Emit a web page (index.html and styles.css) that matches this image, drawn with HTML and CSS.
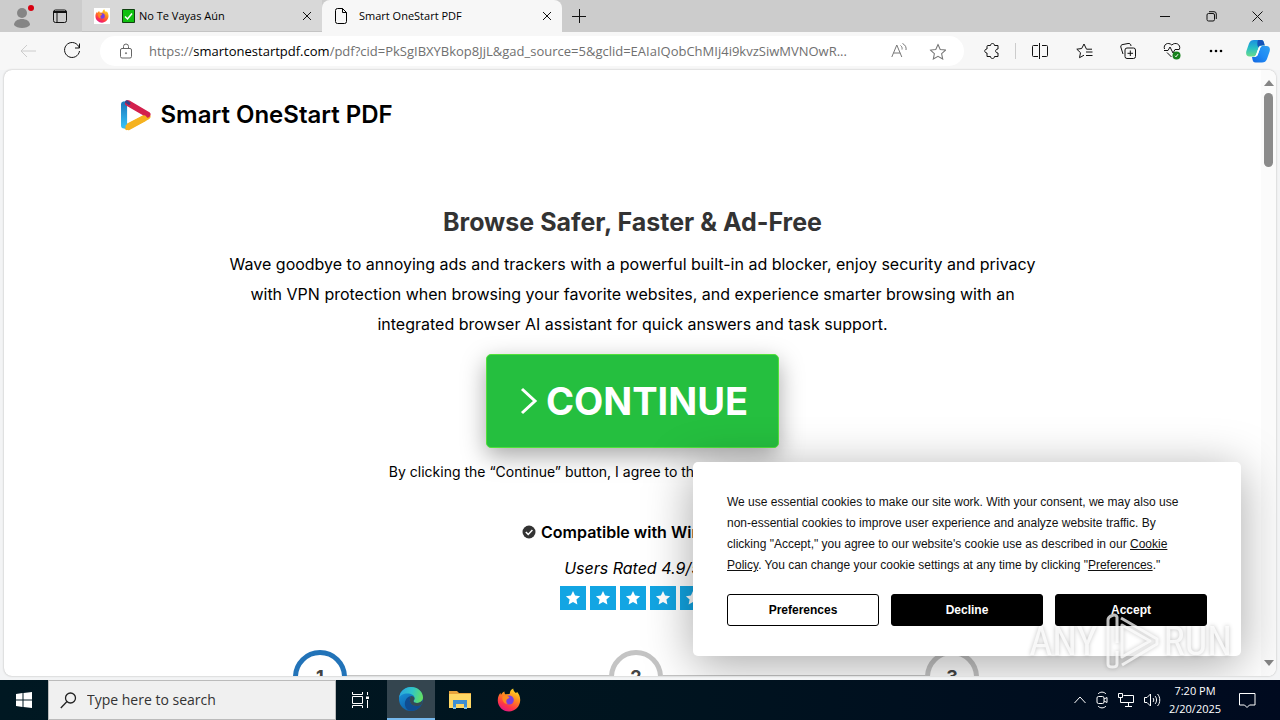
FILE: index.html
```html
<!DOCTYPE html>
<html lang="en">
<head>
<meta charset="utf-8">
<meta name="viewport" content="width=device-width, initial-scale=1">
<title>Smart OneStart PDF</title>
<link rel="stylesheet" href="styles.css">
</head>
<body>
<svg class="defs" width="0" height="0" aria-hidden="true">
  <defs>
    <linearGradient id="fox" x1="0.8" y1="0" x2="0.3" y2="1"><stop offset="0" stop-color="#ffe226"/><stop offset="0.4" stop-color="#ff8a1e"/><stop offset="0.75" stop-color="#ff3647"/><stop offset="1" stop-color="#e31587"/></linearGradient>
    <linearGradient id="edgeTop" x1="0" y1="0.4" x2="1" y2="0.6"><stop offset="0" stop-color="#2aa5e0"/><stop offset="0.5" stop-color="#30c5c8"/><stop offset="1" stop-color="#66e05c"/></linearGradient>
    <linearGradient id="edgeLow" x1="0" y1="0" x2="0.6" y2="1"><stop offset="0" stop-color="#1b9de2"/><stop offset="1" stop-color="#0c59a4"/></linearGradient>
    <linearGradient id="copA" x1="0" y1="0" x2="0" y2="1"><stop offset="0" stop-color="#1a8fe0"/><stop offset="0.5" stop-color="#28bfc4"/><stop offset="1" stop-color="#6bdc8a"/></linearGradient>
    <linearGradient id="copB" x1="1" y1="0" x2="0" y2="1"><stop offset="0" stop-color="#2fa0f0"/><stop offset="0.5" stop-color="#1f8bf5"/><stop offset="1" stop-color="#1266e0"/></linearGradient>
    <linearGradient id="logoBlue" x1="0" y1="0" x2="0" y2="1"><stop offset="0" stop-color="#1d7cc0"/><stop offset="1" stop-color="#35bdf2"/></linearGradient>
    <symbol id="firefox" viewBox="0 0 24 24">
      <path fill="url(#fox)" d="M12.6 6 13.2 3.4C14 2 15.2 1 16.2.6c0 2 1.200 3 2.600 4.400C19.500 5 20 4.500 20 3.800c2 2.200 3.400 5.200 3.200 8.800C22.900 18.800 18 23.500 12 23.500S1 18.800.8 13C.6 9.500 1.800 6.600 3.500 4.800c0 1 .2 1.600.5 2 .9-1.600 2-2.600 3.400-3.300 0 1.300.3 2 .9 2.700z"/>
      <circle cx="12.200" cy="12" r="4.600" fill="#7a3ee0"/>
      <path fill="#ff8a1f" d="M5.500 8.500C7 7 9.500 7 11.500 8.500l1 1.300c-1 1-2.500 1-3 2.200-.5 1.700 0 3 1.200 4-3 .3-6.200-3-5.200-7.500z"/>
    </symbol>
    <symbol id="star" viewBox="0 0 16 16"><path d="m8 1 2.100 4.600 5 .6-3.700 3.400 1 5L8 12.100l-4.400 2.500 1-5L.9 6.200l5-.6z"/></symbol>
  </defs>
</svg>

<header class="tabbar">
  <button class="plain profile" aria-label="Profile"><svg width="28" height="28" viewBox="0 0 28 28"><circle cx="14" cy="11" r="5" fill="#858585"/><path d="M6 23c0-8 16-8 16 0-3 4-13 4-16 0z" fill="#858585"/><circle cx="23" cy="6" r="3" fill="#d80010"/></svg></button>
  <button class="plain actions" aria-label="Tab actions"><svg class="line" width="16" height="16" viewBox="0 0 16 16"><rect x="1.500" y="2" width="13" height="12.500" rx="2"/><path d="M1.500 3.500h13M1.500 4.500h13M5 4v10"/></svg></button>
  <div class="tab">
    <svg class="favicon" width="16" height="16"><rect width="16" height="16" fill="#fff"/><use href="#firefox" x="1" y="1" width="14" height="14"/></svg>
    <svg class="check" width="13" height="14" viewBox="0 0 13 14"><path fill="#10c010" stroke="#104010" d="M.5.5h12v13H.5z"/><path d="m3 7.500 2.500 2.500L10 4.500" fill="none" stroke="#fff" stroke-width="1.500"/></svg>
    <span class="tab-name">No Te Vayas Aún</span>
    <button class="plain close" aria-label="Close tab"><svg class="line" width="10" height="10" viewBox="0 0 10 10"><path d="m1 1 8 8M9 1 1 9"/></svg></button>
  </div>
  <div class="tab tab-active">
    <svg class="line favicon" width="16" height="18" viewBox="0 0 16 18"><path d="M4.500 1.500h5l4 4v9a2 2 0 0 1-2 2h-7a2 2 0 0 1-2-2v-11a2 2 0 0 1 2-2zM9.500 1.500v4h4"/></svg>
    <span class="tab-name">Smart OneStart PDF</span>
    <button class="plain close" aria-label="Close tab"><svg class="line" width="10" height="10" viewBox="0 0 10 10"><path d="m1 1 8 8M9 1 1 9"/></svg></button>
  </div>
  <button class="plain newtab" aria-label="New tab"><svg class="line" width="14" height="14" viewBox="0 0 14 14"><path d="M7.500 0v14M0 7.500h14"/></svg></button>
  <div class="window-buttons">
    <button class="plain" aria-label="Minimize"><svg class="line" width="10" height="10" viewBox="0 0 10 10"><path d="M0 5.500h10"/></svg></button>
    <button class="plain" aria-label="Restore"><svg class="line" width="11" height="11" viewBox="0 0 11 11"><rect x="1" y="2.500" width="7.500" height="7.500" rx="1.500"/><path d="M3 .7h5a2.300 2.300 0 0 1 2.300 2.300v5"/></svg></button>
    <button class="plain" aria-label="Close"><svg class="line" width="11" height="11" viewBox="0 0 11 11"><path d="m.5.5 10 10M10.500.5l-10 10"/></svg></button>
  </div>
</header>

<nav class="toolbar">
  <button class="plain back" aria-label="Back" disabled><svg class="line" width="16" height="14" viewBox="0 0 16 14"><path d="M16 7H1M7 1 1 7l6 6"/></svg></button>
  <button class="plain reload" aria-label="Refresh"><svg class="line" width="18" height="18" viewBox="0 0 18 18"><path d="M16.300 6A7.500 7.500 0 1 0 16.500 9M16.500 1.500V6H12"/></svg></button>
  <div class="address">
    <svg class="line lock" width="14" height="16" viewBox="0 0 14 16"><rect x="1.500" y="5.500" width="11" height="9.500" rx="1.500"/><path d="M4.500 5.500V3.500a2.500 2.500 0 0 1 5 0v2"/><circle cx="7" cy="10.200" r=".6"/></svg>
    <div class="url" role="textbox" aria-label="Address" contenteditable="true" spellcheck="false">https://<b>smartonestartpdf.com</b>/pdf?cid=PkSgIBXYBkop8JjL&amp;gad_source=5&amp;gclid=EAIaIQobChMIj4i9kvzSiwMVNOwR...</div>
    <button class="plain" aria-label="Read aloud"><svg class="line" width="16" height="16" viewBox="0 0 16 16"><path d="M.8 14 5.800 2l5 12M2.600 10h6.600M9.500 2.500c1.500 1 1.800 2.500 1.500 4M11.500.5c3 1.500 4 4 3.500 6.500"/></svg></button>
    <button class="plain" aria-label="Add to favorites"><svg class="line" width="17" height="17" viewBox="-.5 -.5 17 17"><use href="#star"/></svg></button>
  </div>
  <button class="plain ext" aria-label="Extensions"><svg class="line" width="16" height="16" viewBox="0 0 16 16"><path d="M4 2.500h2.500c0-2.700 4-2.700 4 0h3.500v3.500c-3.200 0-3.200 4 0 4v3.500h-3.500c0 2.700-4 2.700-4 0H3v-3.500c-3 0-3-4 0-4V3.500a1 1 0 0 1 1-1z"/></svg></button>
  <span class="rule"></span>
  <button class="plain tool" aria-label="Split screen"><svg class="line" width="16" height="16" viewBox="0 0 16 16"><path d="M6 2.500H1.500a1 1 0 0 0-1 1v9a1 1 0 0 0 1 1H6M10 2.500h4.500a1 1 0 0 1 1 1v9a1 1 0 0 1-1 1H10M7.500 0v16"/></svg></button>
  <button class="plain tool" aria-label="Favorites"><svg class="line" width="17" height="16" viewBox="0 0 17 16"><path d="M16 6.200h-5.500L8 1 5.700 5.500.8 6.200l3.700 3.500-1 5L8 12.200M10 9h6.500M10 12.500h6.500"/></svg></button>
  <button class="plain tool" aria-label="Collections"><svg class="line" width="16" height="16" viewBox="0 0 16 16"><rect x="5" y="5" width="10.500" height="10.500" rx="2"/><path d="M10.300 7.500v5.500M7.500 10.300h5.500M3 11 .8 4A2 2 0 0 1 2 1.700l6-1.200c1.500-.3 3 .5 3 2.500"/></svg></button>
  <button class="plain tool" aria-label="Browser essentials"><svg class="line" width="18" height="18" viewBox="0 0 18 18"><path d="M1.500 7C0 2.500 5-.5 8.800 3 12.500-.5 18 2.500 16.500 7M1 8.500h4L7 5l3 6 2-3.500h4.500M4 10.500 8.500 15"/><circle cx="13.500" cy="13.500" r="4" fill="#16811b" stroke="none"/><path d="m12 13.800 1 1 2-2.600" stroke="#fff"/></svg></button>
  <button class="plain tool" aria-label="Settings and more"><svg width="14" height="4" viewBox="0 0 14 4"><circle cx="2" cy="2" r="1.300"/><circle cx="7" cy="2" r="1.300"/><circle cx="12" cy="2" r="1.300"/></svg></button>
  <button class="plain copilot" aria-label="Copilot"><svg width="24" height="23" viewBox="0 0 24 23"><path fill="url(#copA)" d="M8 0h7c2 0 2.500 1 3 3l.7 2.500C14 5 13 6 12.300 8.500l-2 5.500C9.700 16 9 16.500 7 16.500H3.500C.5 16.500-.4 14 .4 11L3 3.500C4 1 5.500 0 8 0z"/><path fill="#1553b8" d="M12 0h3c2 0 2.500 1 3 3l.7 2.500c-4-.5-6 .5-6.200 2C11 6 11 2 12 0z"/><path fill="url(#copB)" d="M16 22.500H9.500c-2 0-2.500-1-3-3L6 17c4 .3 5.300-.5 6-3l2-5.500C14.700 6.500 15.300 6 17 6h3.500c3 0 3.900 2.500 3.100 5.500L21 19c-1 2.500-2.500 3.500-5 3.500z"/><path fill="#fff" d="M12.300 8.500C13 6.500 14 6 17 6c-1.700 0-2.300.5-3 2.500L12 14c-.7 2.300-2 3.100-5 2.600 2 0 2.700-.6 3.300-2.600z"/></svg></button>
</nav>

<div class="frame">
  <main class="page">
    <div class="brand">
      <svg width="32" height="32" viewBox="0 0 32 32" fill="none" stroke-width="6" stroke-linecap="round"><path stroke="#f5b21f" d="M27.500 17.500 7 28"/><path stroke="url(#logoBlue)" d="M4 5.500v21M4.100 5.500v21"/><path stroke="#d3204d" d="M8 4.200 27.500 15.500"/><path stroke="#f5b21f" d="m24 19.500-15.500 8.500"/><path stroke="#3a3f87" stroke-width="3" d="M6.500 2.800 9 4.500"/></svg>
      <span class="brand-name">Smart OneStart PDF</span>
    </div>
    <h1 class="headline">Browse Safer, Faster &amp; Ad-Free</h1>
    <p class="lead">Wave goodbye to annoying ads and trackers with a powerful built-in ad blocker, enjoy security and privacy with VPN protection when browsing your favorite websites, and experience smarter browsing with an integrated browser AI assistant for quick answers and task support.</p>
    <button class="cta"><svg width="18" height="28" viewBox="0 0 18 28" fill="none" stroke="#fff" stroke-width="3"><path d="m2 2 13 12L2 26"/></svg>CONTINUE</button>
    <p class="terms">By clicking the “Continue” button, I agree to the Terms and Privacy Policy.</p>
    <p class="compat"><svg width="14" height="14" viewBox="0 0 14 14"><circle cx="7" cy="7" r="6.500" fill="#333"/><path d="m3.800 7 2.400 2.400 4.200-4.500" fill="none" stroke="#fff" stroke-width="1.500"/></svg>Compatible with Windows</p>
    <p class="rated">Users Rated 4.9/5</p>
    <div class="stars">
      <svg class="star"><use href="#star" x="5" y="4" width="16" height="16"/></svg>
      <svg class="star"><use href="#star" x="5" y="4" width="16" height="16"/></svg>
      <svg class="star"><use href="#star" x="5" y="4" width="16" height="16"/></svg>
      <svg class="star"><use href="#star" x="5" y="4" width="16" height="16"/></svg>
      <svg class="star"><use href="#star" x="5" y="4" width="16" height="16"/></svg>
    </div>
    <div class="steps">
      <span class="step step-on">1</span><span class="bar"></span>
      <span class="step">2</span><span class="bar"></span>
      <span class="step">3</span>
    </div>
  </main>
  <div class="scroll"><svg width="10" height="6"><path d="m0 6 5-6 5 6z"/></svg><span class="thumb"></span><svg width="10" height="6"><path d="m0 0 5 6 5-6z"/></svg></div>

  <section class="consent" role="dialog" aria-label="Cookie consent">
    <p class="consent-text">We use essential cookies to make our site work. With your consent, we may also use non-essential cookies to improve user experience and analyze website traffic. By clicking "Accept," you agree to our website's cookie use as described in our <a href="#cookies">Cookie Policy</a>. You can change your cookie settings at any time by clicking "<a href="#preferences">Preferences</a>."</p>
    <div class="consent-actions">
      <button class="choice choice-light">Preferences</button>
      <button class="choice">Decline</button>
      <button class="choice">Accept</button>
    </div>
  </section>
  <div class="watermark"><span>ANY</span><svg width="58" height="62" viewBox="0 0 58 62" fill="none" stroke="#fff" stroke-opacity=".75" stroke-width="3" stroke-linejoin="round"><path d="M19 7 55 28v5L20 54M15 40v13c0 4-9 4-9 0V9c0-4 8-7 9-3v26M20 14l28 16-28 16z"/></svg><span>RUN</span></div>
</div>

<footer class="taskbar">
  <button class="plain start" aria-label="Start"><svg width="16" height="16" viewBox="0 0 16 16" fill="#fff"><path d="m0 2 6.500-1v6.500H0zM7.500.9 16 0v7.500H7.500zM0 8.500h6.500V15L0 14zM7.500 8.500H16V16l-8.500-1z"/></svg></button>
  <label class="search"><svg width="17" height="17" viewBox="0 0 17 17" fill="none" stroke="#222" stroke-width="1.300"><circle cx="10.500" cy="6" r="5"/><path d="M7 9.500.8 16"/></svg><input type="text" placeholder="Type here to search" aria-label="Type here to search"></label>
  <button class="plain app" aria-label="Task view"><svg width="17" height="16" viewBox="0 0 17 16" fill="none" stroke="#fff"><path d="M.5 0v2.500h10V0M.5 4.500h10v7H.5zM.5 16v-2.500h10V16M15.500 0v3M15.500 8v8"/><path d="M14 4.500h3v2.500h-3z" fill="#fff" stroke="none"/></svg></button>
  <button class="plain app app-on" aria-label="Microsoft Edge"><svg width="24" height="24" viewBox="0 0 24 24"><circle cx="12" cy="12" r="12" fill="url(#edgeLow)"/><path fill="url(#edgeTop)" d="M0 11C1 4 6 0 12 0c7 0 12 5 12 10.500 0 3.500-3 5.500-6 5.500-2.500 0-3.500-1-3.500-2 0-.7 1-1 1-3C15.500 8 12 6.500 8.500 6.500 4 6.500 1 8.500 0 11z"/><path fill="#104c91" d="M9 23c-3-2.500-4-6-2.500-9.500C7.500 11 9.500 9.500 12 9c-2 3-1.500 7 1.500 9 3 1.700 6 1.300 9-.5-3 5-8 7.500-13.500 5.500z"/><path fill="#354a55" d="M12 9c2 0 3.500 1 3.500 2.500s-1 1.800-1 2.500c0 1 1 2 3.500 2 2 0 4-1 5.200-2.500.5.5.3 2.500-.7 4-3 1.800-6 2.200-9 .5C10.500 16 10 12 12 9z"/></svg></button>
  <button class="plain app" aria-label="File Explorer"><svg width="22" height="20" viewBox="0 0 22 20"><path fill="#e8a33c" d="M0 1h8l2 2h12v6H0z"/><path fill="#ffd764" d="M0 4h22v14H0z"/><path fill="#3f8fd2" d="M4 10h14v8h-3v-4H7v4H4z"/><path fill="#7ac0ee" d="M4 17h3v2H4zM15 17h3v2h-3z"/></svg></button>
  <button class="plain app" aria-label="Firefox"><svg width="24" height="24"><use href="#firefox" width="24" height="24"/></svg></button>
  <div class="tray">
    <svg width="12" height="8" viewBox="0 0 12 8"><path d="m.5 7 5.500-6 5.500 6"/></svg>
    <svg width="12" height="18" viewBox="0 0 12 18"><rect x="1" y="5.500" width="7" height="7" rx="1.500"/><path d="m8 8 3-1.500v5L8 10M2 3c2-2.500 6-2.500 8 0M2 15c2 2.500 6 2.500 8 0"/></svg>
    <svg width="16" height="14" viewBox="0 0 16 14"><path d="M5.500 2.500h10v7h-10M.5.500h4v4h-4zM2.500 5v4.500h4M10.500 9.500v4M7 13.500h7"/></svg>
    <svg width="17" height="16" viewBox="0 0 17 16"><path d="M.5 5.500H3L6.500 2v12L3 10.500H.5zM9 6c1 1 1 3 0 4M11 4c2 2 2 6 0 8M13.500 2c3 3 3 9 0 12"/></svg>
    <div class="clock"><span>7:20 PM</span><span>2/20/2025</span></div>
    <svg width="17" height="17" viewBox="0 0 17 17"><path d="M.5 1.500h15.500v11.500h-5.500l-2.500 2.500-2.500-2.500h-5z"/></svg>
  </div>
</footer>
</body>
</html>
```
FILE: styles.css
```css
* { box-sizing: border-box; }
body {
  margin: 0;
  height: 100vh;
  display: flex;
  flex-direction: column;
  overflow: hidden;
  background: #f3f4f5;
  color: #000;
  font-family: Inter, "Liberation Sans", sans-serif;
}
p, h1 { margin: 0; }
svg { flex: none; }
.defs { position: absolute; }
.line { fill: none; stroke: currentColor; }
.plain {
  display: flex;
  align-items: center;
  justify-content: center;
  flex: none;
  padding: 0;
  border: 0;
  background: none;
  color: #111;
}

/* Tab strip */
.tabbar {
  display: flex;
  flex: none;
  height: 32px;
  background: #ccc;
  font: 11px/16px "Open Sans", "Noto Sans", sans-serif;
}
.profile { width: 44px; }
.actions { width: 32px; margin-right: 6px; }
.tab {
  display: flex;
  align-items: center;
  width: 240px;
  padding: 0 8px 0 12px;
  background: #d8d8d8;
  border-bottom: 1px solid #c4c4c4;
}
.tab-active {
  padding-left: 11px;
  background: #f7f7f7;
  border: 0;
  border-radius: 8px 8px 0 0;
}
.favicon { margin-right: 10px; }
.check { margin: 0 4px 0 2px; }
.tab-name { flex: 1; white-space: nowrap; }
.close { width: 14px; }
.newtab { width: 34px; }
.window-buttons { display: flex; margin-left: auto; }
.window-buttons .plain { width: 46px; }

/* Toolbar */
.toolbar {
  display: flex;
  flex: none;
  align-items: center;
  height: 38px;
  padding: 0 10px 0 12px;
  background: #f7f7f7;
}
.back { width: 32px; color: #ccc; }
.reload { width: 32px; margin: 0 12px; }
.address {
  display: flex;
  flex: 1;
  align-items: center;
  min-width: 0;
  height: 30px;
  padding: 0 18px 0 19px;
  border-radius: 16px;
  background: #fff;
}
.address .plain { color: #777; margin-left: 22px; }
.address .plain:first-of-type { margin-left: 12px; }
.lock { color: #666; margin-right: 16px; }
.url {
  flex: 1;
  min-width: 0;
  overflow: hidden;
  white-space: nowrap;
  text-overflow: ellipsis;
  color: #707070;
  font: 13px/20px "Open Sans", "Noto Sans", sans-serif;
}
.url b { color: #000; font-weight: 400; }
.ext { width: 32px; margin-left: 12px; }
.rule { width: 1px; height: 16px; margin: 0 2px 0 7px; background: #ccc; }
.tool { width: 44px; }
.copilot { margin-left: 8px; }

/* Web page */
.frame {
  position: relative;
  display: flex;
  flex: 1;
  min-height: 0;
  margin: 0 4px 4px;
  overflow: hidden;
  border-radius: 8px;
  background: #fff;
  box-shadow: 0 0 2px #aaa;
}
.page {
  display: flex;
  flex: 1;
  flex-direction: column;
  align-items: center;
  min-width: 0;
}
.brand {
  display: flex;
  align-items: center;
  gap: 9px;
  width: 100%;
  max-width: 1026px;
  padding: 29px 0 0;
}
.brand-name { font-size: 24px; line-height: 32px; font-weight: 600; }
.headline {
  margin-top: 76px;
  color: #333;
  font-size: 25px;
  line-height: 30px;
  font-weight: 700;
}
.lead {
  max-width: 830px;
  margin-top: 12px;
  font-size: 16px;
  line-height: 30px;
  text-align: center;
}
.cta {
  display: flex;
  align-items: center;
  gap: 8px;
  margin-top: 15px;
  padding: 22px 30px 22px 33px;
  border: 1px solid #52e03a;
  border-radius: 5px;
  background: #25bf3f;
  box-shadow: 0 8px 24px rgba(0, 0, 0, .35);
  color: #fff;
  font: 700 38px/48px Inter, sans-serif;
}
.terms { margin-top: 14px; font-size: 14px; line-height: 20px; }
.compat {
  display: flex;
  align-items: center;
  gap: 5px;
  margin-top: 40px;
  font-size: 16px;
  line-height: 20px;
  font-weight: 600;
}
.rated { margin-top: 16px; font-size: 16px; line-height: 20px; font-style: italic; }
.stars { display: flex; gap: 4px; margin-top: 8px; }
.star { width: 26px; height: 24px; background: #12a5e3; fill: #fff; }
.steps {
  display: flex;
  align-items: center;
  width: 686px;
  max-width: 100%;
  margin: 40px 0 0 7px;
}
.step {
  flex: none;
  width: 54px;
  height: 54px;
  border: 5px solid #c4c4c4;
  border-radius: 50%;
  color: #444;
  font-size: 18px;
  line-height: 44px;
  font-weight: 700;
  text-align: center;
}
.step-on { border-color: #2273b8; }
.bar { flex: 1; height: 5px; background: #c4c4c4; }
.scroll {
  display: flex;
  flex: none;
  flex-direction: column;
  align-items: center;
  width: 15px;
  padding: 10px 0;
  background: #fbfbfb;
  fill: #858585;
}
.thumb { width: 9px; height: 74px; margin: 7px 0 auto; border-radius: 5px; background: #8b8b8b; }

/* Cookie consent */
.consent {
  position: absolute;
  right: 35px;
  bottom: 20px;
  width: 548px;
  max-width: 100%;
  padding: 30px 34px;
  border-radius: 5px;
  background: #fff;
  box-shadow: 0 8px 48px rgba(0, 0, 0, .35);
  font-family: "Liberation Sans", Arial, sans-serif;
}
.consent-text { max-width: 465px; font-size: 12px; line-height: 21px; color: #111; }
.consent-text a { color: inherit; }
.consent-actions { display: flex; gap: 12px; margin-top: 18px; }
.choice {
  flex: 1;
  height: 32px;
  padding: 0;
  border: 1px solid #000;
  border-radius: 3px;
  background: #000;
  color: #fff;
  font: 700 12px/16px "Liberation Sans", Arial, sans-serif;
}
.choice-light { background: #fff; color: #000; }
.watermark {
  position: absolute;
  right: 44px;
  bottom: 3px;
  display: flex;
  align-items: center;
  gap: 4px;
  color: rgba(255, 255, 255, .8);
  font: 40px/62px "Liberation Sans Narrow", "Roboto Condensed", "Open Sans Condensed", Roboto, sans-serif;
  filter: drop-shadow(0 0 2px rgba(0, 0, 0, .3));
  pointer-events: none;
}

/* Taskbar */
.taskbar {
  display: flex;
  flex: none;
  height: 40px;
  background: linear-gradient(90deg, #001822, #00141f 50%, #000a1f);
  color: #fff;
  font: 11px/18px "Open Sans", "Noto Sans", sans-serif;
}
.start { width: 48px; }
.search {
  display: flex;
  align-items: center;
  gap: 10px;
  width: 288px;
  padding: 0 11px;
  border: 1px solid #bbb;
  background: #f0f0f0;
}
.search input {
  flex: 1;
  min-width: 0;
  padding: 0;
  border: 0;
  background: none;
  font: 14px/20px "Open Sans", "Noto Sans", sans-serif;
}
.search input::placeholder { color: #333; opacity: 1; }
.app { width: 48px; margin-right: 1px; }
.app-on { margin-left: 2px; background: #34454f; border-bottom: 2px solid #76b9ed; }
.tray {
  display: flex;
  align-items: center;
  gap: 10px;
  margin-left: auto;
  padding-right: 24px;
  fill: none;
  stroke: #fff;
}
.clock { display: flex; flex-direction: column; align-items: center; width: 52px; margin: 0 8px 0 -2px; white-space: nowrap; stroke: none; }
```
